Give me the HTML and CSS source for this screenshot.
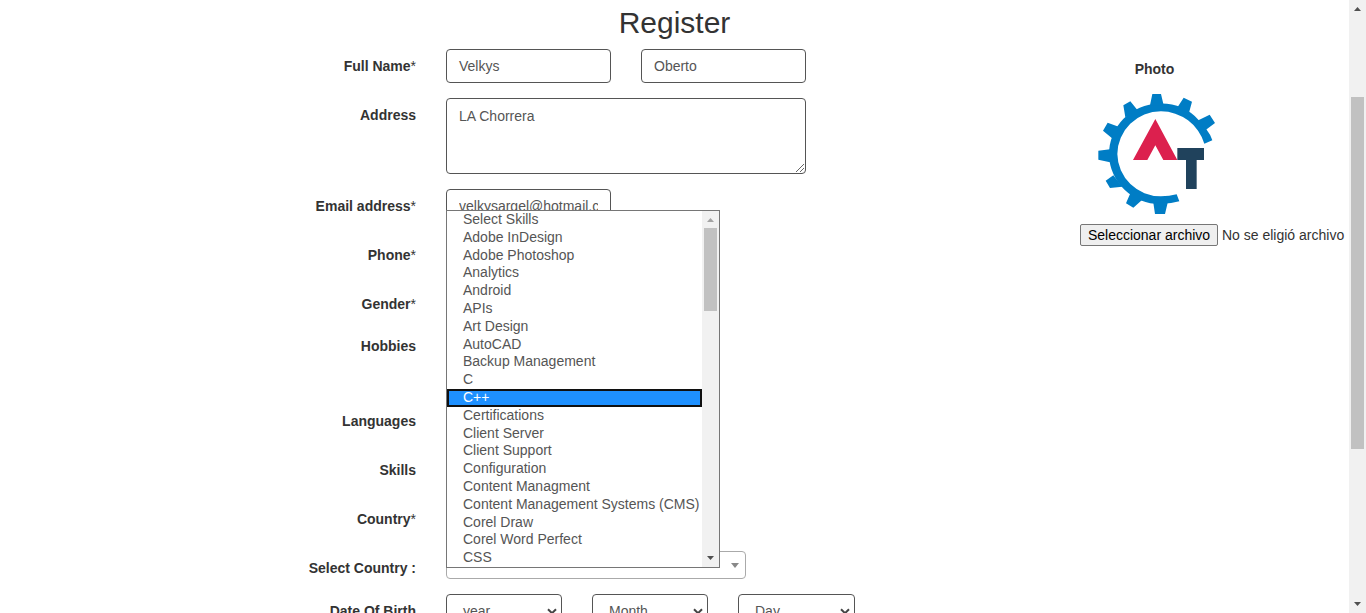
FILE: index.html
```
<!DOCTYPE html>
<html lang="es">
<head>
<meta charset="utf-8">
<title>Register</title>
<link rel="stylesheet" href="styles.css">
</head>
<body>
<div class="page">
  <main class="content">
    <h1 class="title">Register</h1>
    <div class="columns">
      <form class="form">
        <div class="row"><label class="label">Full Name<span class="req">*</span></label>
          <div class="pair"><div class="control">Velkys</div><div class="control">Oberto</div></div></div>
        <div class="row"><label class="label">Address</label>
          <div class="control address">LA Chorrera<svg class="grip" viewBox="0 0 10 10"><path d="M1 9L9 1M5 9L9 5"/></svg></div></div>
        <div class="row"><label class="label">Email address<span class="req">*</span></label>
          <div class="control half"><span class="clip">velkysargel@hotmail.com</span></div></div>
        <div class="row"><label class="label">Phone<span class="req">*</span></label></div>
        <div class="row gender"><label class="label">Gender<span class="req">*</span></label></div>
        <div class="row hobbies"><label class="label">Hobbies</label></div>
        <div class="row"><label class="label">Languages</label></div>
        <div class="row"><label class="label">Skills</label></div>
        <div class="row"><label class="label">Country<span class="req">*</span></label></div>
        <div class="row country"><label class="label">Select Country :</label>
          <div class="combo"><span class="combo-arrow"></span></div></div>
        <div class="row"><label class="label">Date Of Birth</label>
          <div class="dates">
            <div class="control select">year<svg class="chevron" viewBox="0 0 10 7"><path d="M1 1.2L5 5.2L9 1.2"/></svg></div>
            <div class="control select">Month<svg class="chevron" viewBox="0 0 10 7"><path d="M1 1.2L5 5.2L9 1.2"/></svg></div>
            <div class="control select">Day<svg class="chevron" viewBox="0 0 10 7"><path d="M1 1.2L5 5.2L9 1.2"/></svg></div>
          </div></div>
      </form>
      <aside class="photo">
        <div class="photo-label">Photo</div>
        <svg class="logo" viewBox="0 0 396 390">
          <g fill="#007dc5">
            <path d="M343 167L367 157Q361 139 349 124L325 95A153 153 0 0 0 207 47A152 152 0 0 0 57 200A152 152 0 0 0 211 348Q240 348 268 340L260 319Q238 325 213 325A130 129 0 0 1 82 198A131 129 0 0 1 213 70A136 136 0 0 1 343 167Z"/>
            <path d="M187 18H213L221 52H180ZM281 29L306 41L297 74L261 60ZM359 80L375 105L347 126L322 98ZM121 40L100 52L106 88L144 68ZM53 104L39 128L68 152L90 118ZM25 188V215L60 223V184ZM47 278L60 300L97 296L70 262ZM121 316L108 346L130 359L156 336ZM195 378H225L233 344H190Z"/>
          </g>
          <path fill="#dc204e" d="M196 93L262 216H220L196 172L172 216H129Z"/>
          <path fill="#20425c" d="M262 180H342V216H320V303H288V216H262Z"/>
        </svg>
        <div class="file"><button class="file-button" type="button">Seleccionar archivo</button><span>No se eligió archivo</span></div>
      </aside>
    </div>
    <div class="dropdown">
      <ul class="options">
        <li>Select Skills</li><li>Adobe InDesign</li><li>Adobe Photoshop</li><li>Analytics</li><li>Android</li>
        <li>APIs</li><li>Art Design</li><li>AutoCAD</li><li>Backup Management</li><li>C</li>
        <li class="active">C++</li><li>Certifications</li><li>Client Server</li><li>Client Support</li><li>Configuration</li>
        <li>Content Managment</li><li>Content Management Systems (CMS)</li><li>Corel Draw</li><li>Corel Word Perfect</li><li>CSS</li>
      </ul>
      <div class="scroll list-scroll">
        <svg class="arrow dim" viewBox="0 0 17 17"><path d="M5 11L8.5 7L12 11Z"/></svg>
        <div class="thumb"></div>
        <svg class="arrow" viewBox="0 0 17 17"><path d="M5 6L8.5 10L12 6Z"/></svg>
      </div>
    </div>
  </main>
  <div class="scroll page-scroll">
    <svg class="arrow" viewBox="0 0 17 17"><path d="M5 11L8.5 7L12 11Z"/></svg>
    <div class="thumb"></div>
    <svg class="arrow" viewBox="0 0 17 17"><path d="M5 6L8.5 10L12 6Z"/></svg>
  </div>
</div>
</body>
</html>
```
FILE: styles.css
```
* { box-sizing: border-box; }
body {
  margin: 0;
  overflow: hidden;
  background: #fff;
  color: #333;
  font: 14px/20px "Liberation Sans", Arial, sans-serif;
}
.page { display: flex; height: 613px; overflow: hidden; }
.content { position: relative; flex: 1; min-width: 0; }
.title {
  height: 49px;
  margin: 0;
  padding-top: 6px;
  text-align: center;
  font-size: 30px;
  font-weight: 400;
  line-height: 33px;
}
.columns { display: flex; justify-content: space-between; }
.form { width: 855px; }
.row { display: flex; gap: 30px; min-height: 34px; margin-bottom: 15px; }
.gender { min-height: 27px; }
.hobbies { min-height: 60px; }
.label { width: 416px; padding-top: 7px; text-align: right; font-weight: 700; }
.req { font-weight: 400; }
.control {
  height: 34px;
  padding: 6px 12px;
  border: 1px solid #555;
  border-radius: 4px;
  color: #555;
}
.pair { display: grid; grid-template-columns: 165px 165px; gap: 30px; }
.half { width: 165px; }
.clip { display: block; overflow: hidden; white-space: nowrap; }
.address { position: relative; width: 360px; height: 76px; padding-top: 7px; }
.grip {
  position: absolute;
  right: 0;
  bottom: 0;
  width: 10px;
  height: 10px;
  fill: none;
  stroke: #666;
}
.combo {
  display: flex;
  justify-content: flex-end;
  align-items: center;
  width: 300px;
  height: 28px;
  padding-right: 6px;
  border: 1px solid #aaa;
  border-radius: 4px;
}
.combo-arrow { border: 4px solid transparent; border-top: 5px solid #888; border-bottom: 0; }
.country { height: 28px; min-height: 28px; }
.dates { display: grid; grid-template-columns: 116px 116px 117px; gap: 30px; }
.select {
  display: flex;
  justify-content: space-between;
  align-items: center;
  padding: 6px 4px 6px 16px;
}
.chevron { width: 10px; height: 7px; fill: none; stroke: #444; stroke-width: 2; }
.photo { width: 269px; padding-top: 10px; }
.photo-label { width: 149px; text-align: center; font-weight: 700; }
.logo { display: block; width: 132px; height: 130px; margin: 9px 0 0 10px; }
.file { display: flex; align-items: center; gap: 4px; margin-top: 6px; white-space: nowrap; }
.file-button {
  width: 138px;
  height: 22px;
  padding: 0;
  border: 1px solid #767676;
  border-radius: 2px;
  background: #efefef;
  color: #000;
  font: inherit;
}
.dropdown {
  position: absolute;
  left: 446px;
  top: 210px;
  display: flex;
  width: 274px;
  height: 358px;
  border: 1px solid #767676;
  background: #fff;
}
.options {
  flex: 1;
  min-width: 0;
  margin: 0;
  padding: 0;
  list-style: none;
  color: #555;
  white-space: nowrap;
}
.options li { height: 17.8px; padding-left: 16px; line-height: 17px; }
.options .active {
  padding-left: 14px;
  border: 2px solid #101010;
  background: #1e90ff;
  color: #fff;
  line-height: 13px;
}
.scroll { display: flex; flex-direction: column; width: 17px; background: #f1f1f1; }
.arrow { width: 17px; height: 17px; fill: #505050; }
.dim { fill: #a3a3a3; }
.thumb { width: 13px; margin: 0 auto auto; background: #c1c1c1; }
.list-scroll .thumb { height: 83px; }
.page-scroll .thumb { height: 352px; margin-top: 80px; }
```
